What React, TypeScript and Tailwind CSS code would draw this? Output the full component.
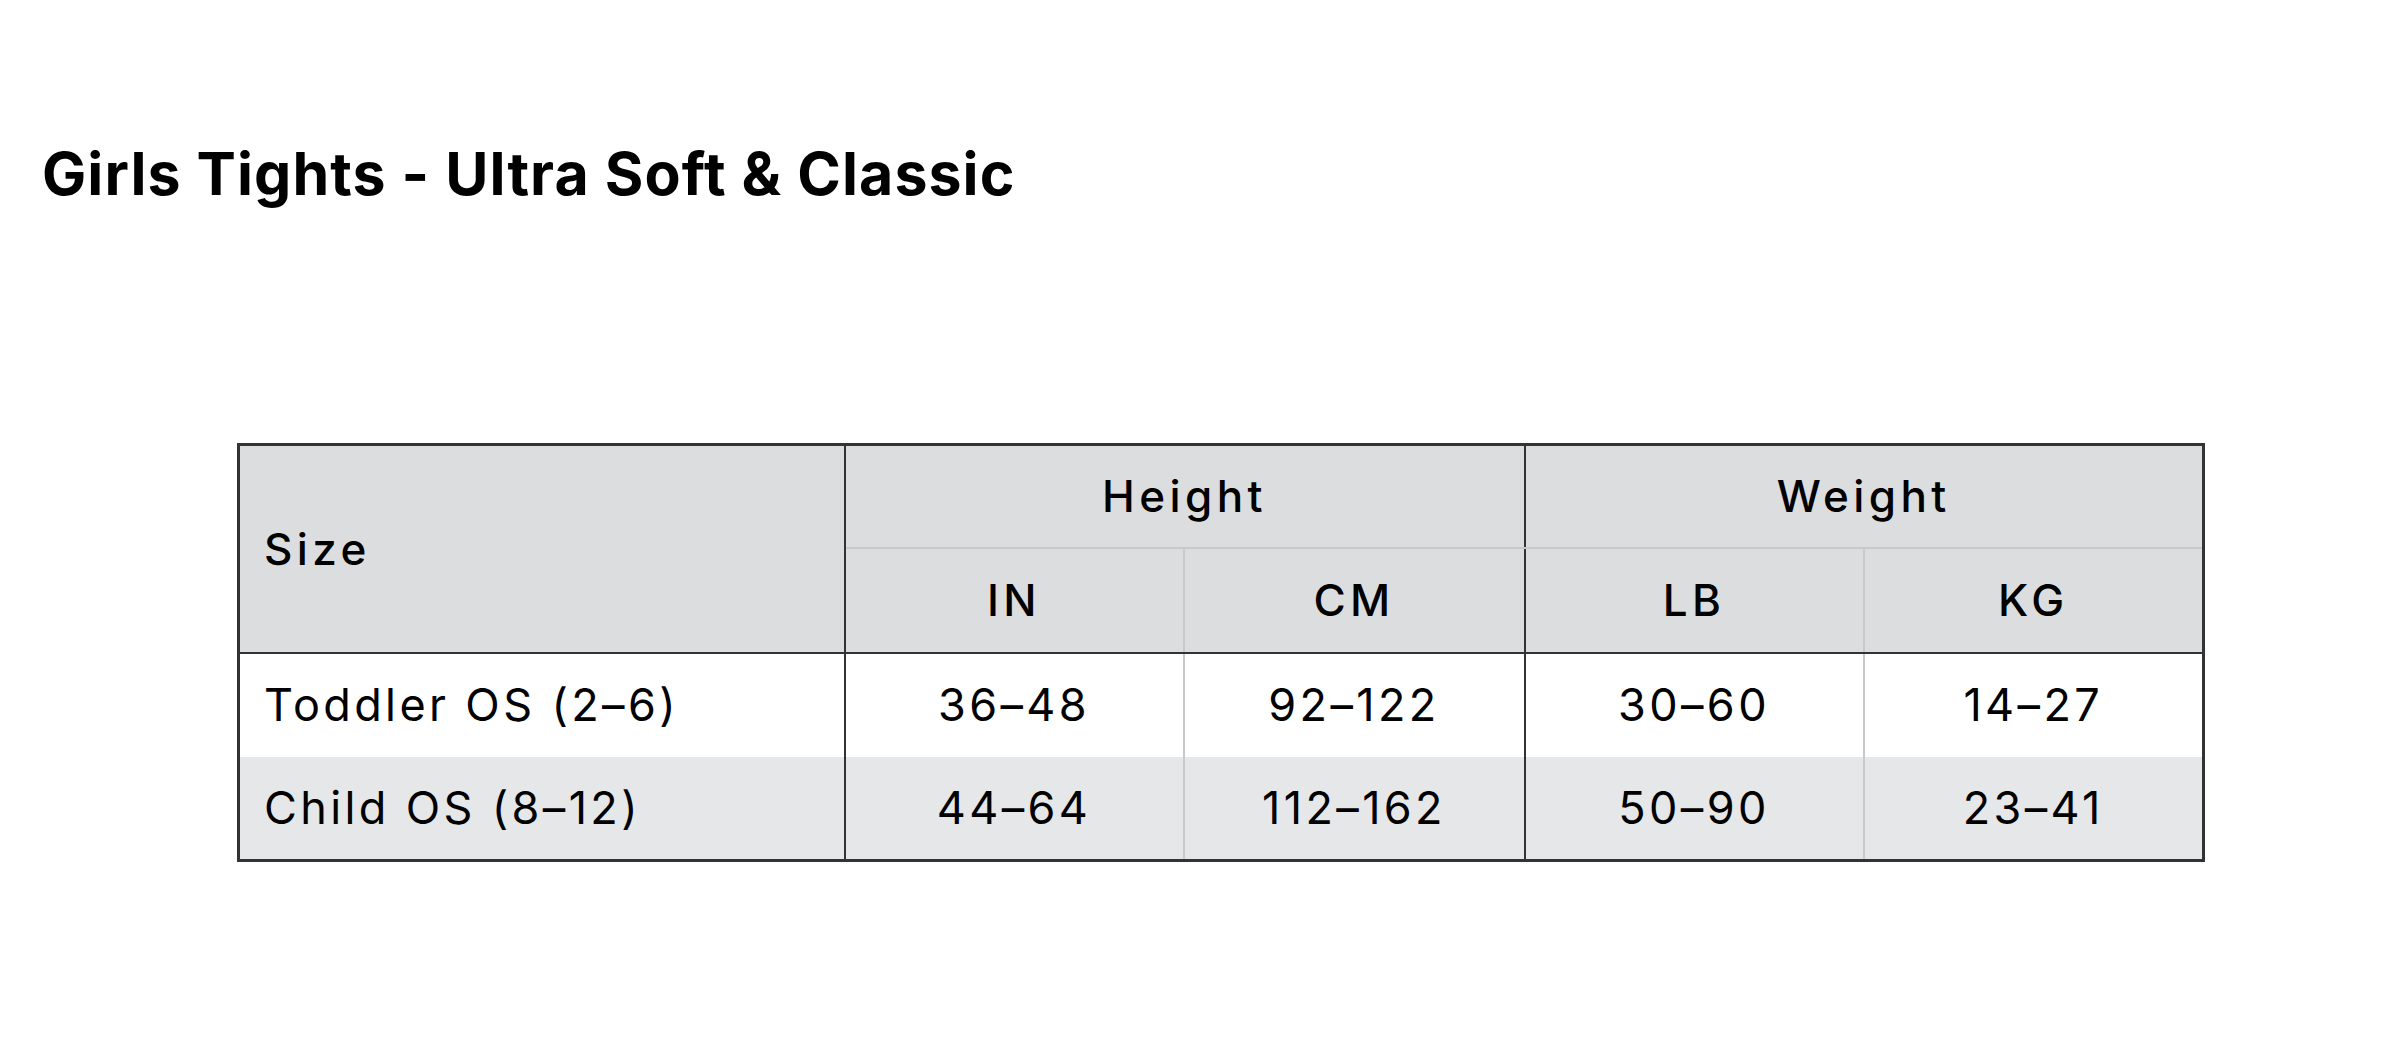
import React from "react";

const rows = [
  { size: "Toddler OS (2–6)", vals: ["36–48", "92–122", "30–60", "14–27"], bg: "bg-white" },
  { size: "Child OS (8–12)", vals: ["44–64", "112–162", "50–90", "23–41"], bg: "bg-[#e6e7e8]" },
];

export default function App() {
  return (
    <div className="w-[2386px] h-[1044px] bg-white text-black" style={{ fontFamily: "Inter, 'Noto Sans', sans-serif" }}>
      <div className="pt-[144px] pl-[42px]">
        <h1 className="text-[59px] leading-none font-bold tracking-[0.018em]">Girls Tights - Ultra Soft &amp; Classic</h1>
      </div>
      <div className="pt-[240px] pl-[237px]">
        <table className="border-collapse table-fixed w-[1965px] border-[3px] border-[#333]">
          <colgroup>
            <col className="w-[606px]" />
            <col className="w-[339px]" />
            <col className="w-[341px]" />
            <col className="w-[339px]" />
            <col className="w-[340px]" />
          </colgroup>
          <thead>
            <tr className="bg-[#dcddde] h-[103px]">
              <th rowSpan={2} className="text-left align-middle pl-[24px] text-[44px] font-medium tracking-[0.1em] border-r-[2px] border-r-[#333] border-b-[2px] border-b-[#333]">
                Size
              </th>
              <th colSpan={2} className="text-center text-[44px] font-medium tracking-[0.1em] border-r-[2px] border-r-[#333] border-b-[2px] border-b-[#c8c9ca]">
                Height
              </th>
              <th colSpan={2} className="text-center text-[44px] font-medium tracking-[0.1em] border-b-[2px] border-b-[#c8c9ca]">
                Weight
              </th>
            </tr>
            <tr className="bg-[#dcddde] h-[105px]">
              <th className="text-center text-[44px] font-medium tracking-[0.1em] border-r-[2px] border-r-[#c8c9ca] border-b-[2px] border-b-[#333]">IN</th>
              <th className="text-center text-[44px] font-medium tracking-[0.1em] border-r-[2px] border-r-[#333] border-b-[2px] border-b-[#333]">CM</th>
              <th className="text-center text-[44px] font-medium tracking-[0.1em] border-r-[2px] border-r-[#c8c9ca] border-b-[2px] border-b-[#333]">LB</th>
              <th className="text-center text-[44px] font-medium tracking-[0.1em] border-b-[2px] border-b-[#333]">KG</th>
            </tr>
          </thead>
          <tbody>
            {rows.map((r) => (
              <tr key={r.size} className={`${r.bg} h-[104px]`}>
                <td className="text-left pl-[24px] text-[45px] font-normal tracking-[0.075em] border-r-[2px] border-r-[#333]">{r.size}</td>
                <td className="text-center text-[45px] font-normal tracking-[0.075em] border-r-[2px] border-r-[#c8c9ca]">{r.vals[0]}</td>
                <td className="text-center text-[45px] font-normal tracking-[0.075em] border-r-[2px] border-r-[#333]">{r.vals[1]}</td>
                <td className="text-center text-[45px] font-normal tracking-[0.075em] border-r-[2px] border-r-[#c8c9ca]">{r.vals[2]}</td>
                <td className="text-center text-[45px] font-normal tracking-[0.075em]">{r.vals[3]}</td>
              </tr>
            ))}
          </tbody>
        </table>
      </div>
    </div>
  );
}
